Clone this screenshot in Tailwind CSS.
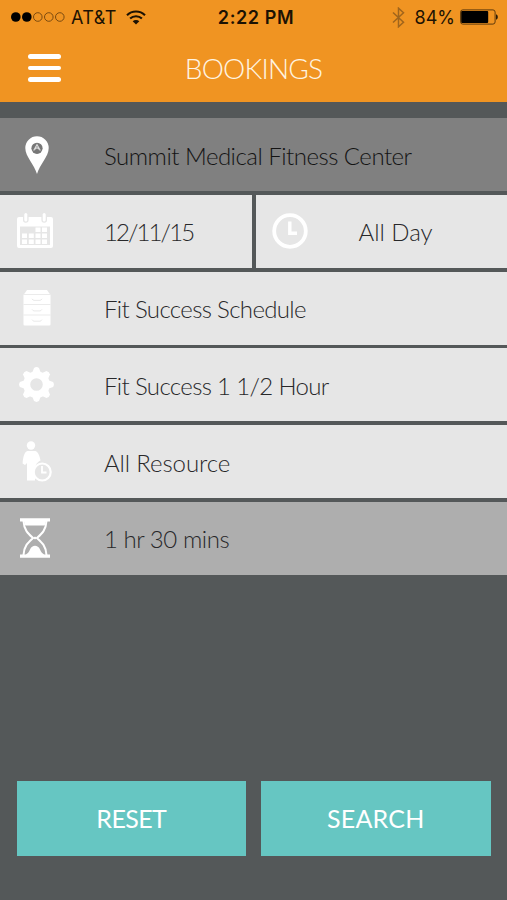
<!DOCTYPE html>
<html lang="en">
<head>
    <meta charset="UTF-8">
    <meta name="viewport" content="width=device-width, initial-scale=1.0">
    <title>Bookings</title>
    <script src="https://cdn.jsdelivr.net/npm/@tailwindcss/browser@4"></script>
</head>
<body class="bg-[#545859] font-['Lato',sans-serif]">
    <div class="w-[507px] h-[900px] flex flex-col overflow-hidden">
        <!-- Header -->
        <header class="h-[102px] bg-[#f09422] shrink-0">
            <!-- Status Bar -->
            <div class="h-[34px] grid grid-cols-3 items-center pl-[11px] pr-[9px] font-['Inter',sans-serif] text-[18px] text-[#1c1203]">
                <div class="flex items-center">
                    <svg class="w-[54px] h-[12px]" viewBox="0 0 54 12">
                        <g fill="#000"><circle cx="4.8" cy="6" r="4.8"/><circle cx="15.8" cy="6" r="4.8"/></g>
                        <g fill="none" stroke="#7a4a10" stroke-width="1"><circle cx="26.8" cy="6" r="4.3"/><circle cx="37.8" cy="6" r="4.3"/><circle cx="48.8" cy="6" r="4.3"/></g>
                    </svg>
                    <span class="ml-[6px] whitespace-nowrap tracking-[0.4px]">AT&amp;T</span>
                    <svg class="ml-[9px] w-[20px] h-[15px]" viewBox="0 0 20 15" fill="none" stroke="#1c1203" stroke-width="2.1">
                        <path d="M1 5.3a12.7 12.7 0 0 1 18 0"/>
                        <path d="M4.1 8.6a8.4 8.4 0 0 1 11.8 0"/>
                        <path d="M10 14.6L6.7 11.3a4.7 4.7 0 0 1 6.6 0z" fill="#1c1203" stroke="none"/>
                    </svg>
                </div>
                <div class="text-center font-semibold whitespace-nowrap tracking-[0.6px] pl-[3px]">2:22 PM</div>
                <div class="flex items-center justify-end">
                    <svg class="w-[13px] h-[21px]" viewBox="0 0 13 21" fill="none" stroke="#a0651c" stroke-width="1.5">
                        <path d="M1 5.5L11.5 15.3L6.5 19.8V1.2L11.5 5.7L1 15.5"/>
                    </svg>
                    <span class="ml-[10px]">84%</span>
                    <svg class="ml-[5px] w-[38px] h-[16px]" viewBox="0 0 38 16">
                        <rect x=".6" y=".9" width="34.500" height="14.2" rx="2.2" fill="none" stroke="#5e3a0c" stroke-width="1"/>
                        <rect x="1.2" y="2" width="27" height="12" rx="1" fill="#000"/>
                        <path d="M36 5.2c2.400.8 2.400 4.800 0 5.600z" fill="#2c1b05"/>
                    </svg>
                </div>
            </div>
            <!-- Title Bar -->
            <div class="h-[68px] grid grid-cols-3 items-center">
                <button class="ml-[28px] w-[33px] flex flex-col gap-[7px]">
                    <span class="h-[4.7px] rounded-full bg-white"></span>
                    <span class="h-[4.7px] rounded-full bg-white"></span>
                    <span class="h-[4.7px] rounded-full bg-white"></span>
                </button>
                <h1 class="text-center text-[28px] font-light text-[#fff4e2] tracking-[-0.8px]">BOOKINGS</h1>
            </div>
        </header>

        <!-- Booking Options -->
        <main class="mt-4 flex flex-col gap-[3.8px] text-[24px] font-light text-[#28282a]">
            <div class="h-[73px] bg-[#808080] flex items-center text-[#141414]">
                <div class="w-[104px] shrink-0 pl-[24.500px]">
                    <svg class="w-[24px] h-[38px]" viewBox="0 0 24 38">
                        <path d="M12 38C9.500 29 .3 20.500 .3 12a11.700 11.700 0 0 1 23.400 0C23.700 20.500 14.500 29 12 38z" fill="#fff"/>
                        <circle cx="12" cy="12.300" r="5.600" fill="#777"/>
                        <path d="M8.700 14.500L12 8.800l3.300 5.700M10 13.300c1-1.800 3-1.800 4 0" fill="none" stroke="#ddd" stroke-width="1.200"/>
                    </svg>
                </div>
                <span class="pt-[2px] tracking-[-0.500px]">Summit Medical Fitness Center</span>
            </div>
            <div class="h-[73px] flex gap-1">
                <div class="flex-1 bg-[#e6e6e6] flex items-center">
                    <div class="w-[104px] shrink-0 pl-[17px]">
                        <svg class="w-[36px] h-[36px]" viewBox="0 0 36 36">
                            <path d="M2 4h4v3a2.800 2.800 0 0 0 5.600 0V4h12.800v3A2.800 2.800 0 0 0 30 7V4h4a2 2 0 0 1 2 2v27a2 2 0 0 1-2 2H2a2 2 0 0 1-2-2V6a2 2 0 0 1 2-2z" fill="#fff"/>
                            <path d="M3 13.500h30v18.500H3z" fill="#e6e6e6"/>
                            <g fill="#fff">
                                <rect x="7.300" y="0" width="3" height="8.500" rx="1.500"/><rect x="25.700" y="0" width="3" height="8.500" rx="1.500"/>
                                <path d="M18.500 14.500h5v4.600h-5zM25 14.500h5v4.600h-5zM5 20.500h5v4.600H5zM11.800 20.500h5v4.600h-5zM18.500 20.500h5v4.600h-5zM25 20.500h5v4.600h-5zM5 26.500h5v4.600H5zM11.800 26.500h5v4.600h-5zM18.500 26.500h5v4.600h-5zM25 26.500h5v4.600h-5z"/>
                            </g>
                        </svg>
                    </div>
                    <span class="pt-[2px] tracking-[-1.900px]">12/11/15</span>
                </div>
                <div class="flex-1 bg-[#e6e6e6] flex items-center">
                    <div class="w-[103px] shrink-0 pl-[16px]">
                        <svg class="w-[36px] h-[36px]" viewBox="0 0 36 36" fill="none" stroke="#fff">
                            <circle cx="18" cy="18" r="15.800" stroke-width="3.800"/>
                            <path d="M17.800 8.500V20.200H25" stroke-width="3.400"/>
                        </svg>
                    </div>
                    <span class="pt-[2px]">All Day</span>
                </div>
            </div>
            <div class="h-[73px] bg-[#e6e6e6] flex items-center">
                <div class="w-[104px] shrink-0 pl-[23px]">
                    <svg class="w-[28px] h-[36px]" viewBox="0 0 28 36">
                        <path d="M4 0h20l3.500 5v29.500a1 1 0 0 1-1 1H1.500a1 1 0 0 1-1-1V5z" fill="#fff"/>
                        <g fill="none" stroke="#e6e6e6">
                            <path d="M1 4.500h26M.5 14.500h27M.5 25h27" stroke-width=".8"/>
                            <path d="M9 8.800q1 1.600 2 1.600h6q1 0 2-1.600M9 19.300q1 1.600 2 1.600h6q1 0 2-1.600M9 29.600q1 1.600 2 1.600h6q1 0 2-1.600" stroke-width=".9"/>
                        </g>
                    </svg>
                </div>
                <span class="pt-[2px] tracking-[-0.650px]">Fit Success Schedule</span>
            </div>
            <div class="h-[73px] bg-[#e6e6e6] flex items-center">
                <div class="w-[104px] shrink-0 pl-[19px]">
                    <svg class="w-[35px] h-[35px]" viewBox="-17.500 -17.500 35 35">
                        <circle r="9.800" fill="none" stroke="#fff" stroke-width="7"/>
                        <g fill="#fff">
                            <path id="tooth" d="M-4.600 -11L-2.500 -16.600Q0 -18.200 2.500 -16.600L4.600 -11z"/>
                            <use href="#tooth" transform="rotate(45)"/><use href="#tooth" transform="rotate(90)"/><use href="#tooth" transform="rotate(135)"/>
                            <use href="#tooth" transform="rotate(180)"/><use href="#tooth" transform="rotate(225)"/><use href="#tooth" transform="rotate(270)"/><use href="#tooth" transform="rotate(315)"/>
                        </g>
                    </svg>
                </div>
                <span class="pt-[2px] tracking-[-0.650px]">Fit Success 1 1/2 Hour</span>
            </div>
            <div class="h-[73px] bg-[#e6e6e6] flex items-center">
                <div class="w-[104px] shrink-0 pl-[22px]">
                    <svg class="w-[30px] h-[41px]" viewBox="0 0 30 41">
                        <g fill="#fff">
                            <circle cx="9" cy="4.500" r="4.200"/>
                            <path d="M5.500 10h7.500c3 .5 4.800 5 5.500 9.500-4 2-6.500 6-5.500 12V39.500H5V22L3 24 .6 22.500C1 16 2.500 10.500 5.500 10z"/>
                        </g>
                        <circle cx="20.200" cy="31" r="8.500" fill="#e6e6e6" stroke="#fff" stroke-width="2.200"/>
                        <path d="M20 25v6.500h4.500" fill="none" stroke="#fff" stroke-width="1.800"/>
                    </svg>
                </div>
                <span class="pt-[2px] tracking-[-0.100px]">All Resource</span>
            </div>
            <div class="h-[73px] bg-[#aeaeae] flex items-center">
                <div class="w-[104px] shrink-0 pl-[20px]">
                    <svg class="w-[30px] h-[40px]" viewBox="0 0 30 40">
                        <path d="M0 .3h30v3.200H0zM0 36.500h30v3.200H0z" fill="#fff"/>
                        <path d="M3.500 3C4 12 8 15.500 13 20 8 24.500 4 28 3.500 37M26.500 3C26 12 22 15.500 17 20c5 4.500 9 8 9.500 17" fill="none" stroke="#fff" stroke-width="2"/>
                        <path d="M4 3h22l-1.300 4.500H5.300zM5.500 37c2-2 3.500-2.500 4.500-5.500 2-5 8-5 10 0 1 3 2.500 3.500 4.500 5.500z" fill="#fff"/>
                        <path d="M13 20l2-1.500 2 1.500-2 1.500z" fill="#fff"/>
                    </svg>
                </div>
                <span class="pt-[2px] tracking-[-0.450px]">1 hr 30 mins</span>
            </div>
        </main>

        <!-- Actions -->
        <div class="mt-auto mb-[44px] px-[16.500px] grid grid-cols-2 gap-[15px]">
            <button class="h-[75px] bg-[#66c6c2] text-white text-[25px]"><span class="tracking-[-0.600px]">RESET</span></button>
            <button class="h-[75px] bg-[#66c6c2] text-white text-[25px]"><span class="tracking-[0.200px]">SEARCH</span></button>
        </div>
    </div>
</body>
</html>
